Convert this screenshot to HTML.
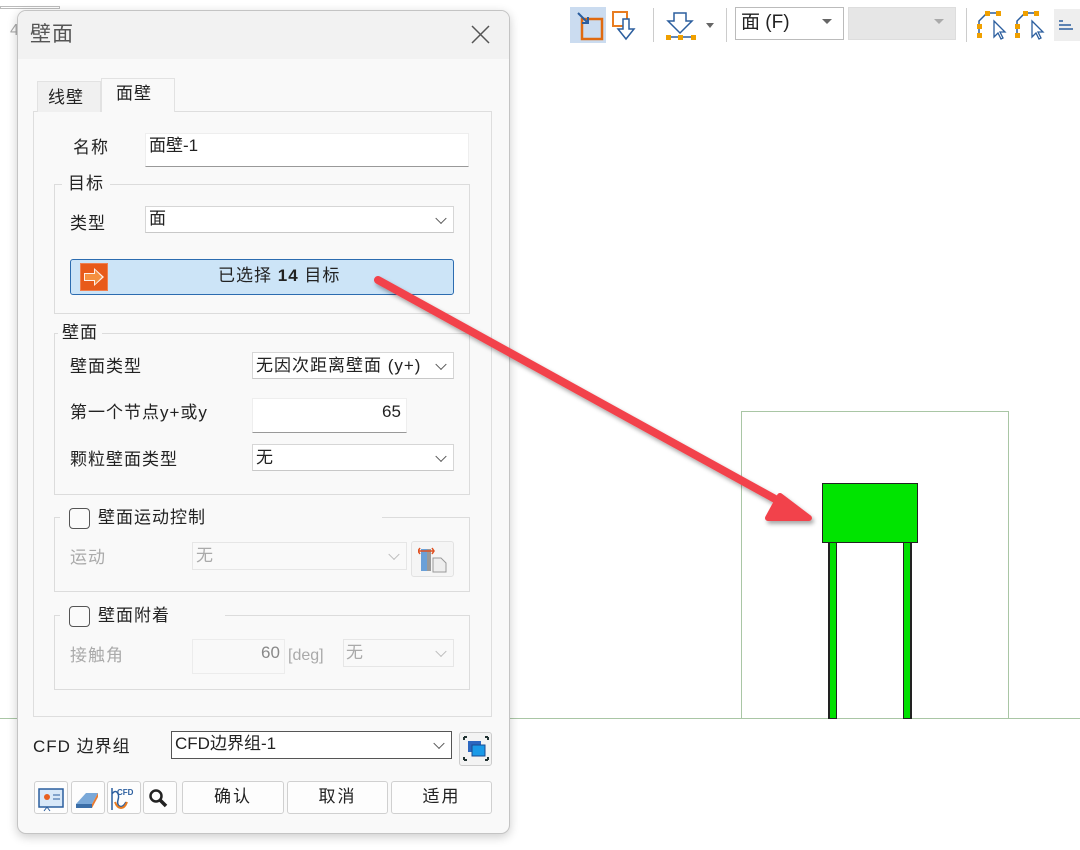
<!DOCTYPE html>
<html><head><meta charset="utf-8"><style>
*{box-sizing:border-box;margin:0;padding:0}
body{width:1080px;height:850px;position:relative;overflow:hidden;background:#fff;font-family:"Liberation Sans","Noto Sans CJK SC",sans-serif;color:#222}
.a{position:absolute}
.t{position:absolute;font-size:16px;line-height:20px;white-space:nowrap;letter-spacing:1px}
.g{color:#aaa}
.box{position:absolute;border:1px solid #dcdcdc}
.sel{position:absolute;background:#fff;border:1px solid #d6d6d6;border-bottom-color:#c8c8c8}
.chev{position:absolute;right:8px;top:50%;width:8px;height:8px;border-right:1.3px solid #555;border-bottom:1.3px solid #555;transform:translateY(-70%) rotate(45deg)}
.btn{position:absolute;background:#fdfdfd;border:1px solid #d0d0d0;border-radius:3px;text-align:center;font-size:17px;line-height:30px;letter-spacing:2px}
.cb{position:absolute;width:21px;height:21px;border:1.5px solid #555;border-radius:4px;background:#fafafa}
</style></head><body>
<div class="a" style="left:0;top:718px;width:1080px;height:1px;background:#a9c6a5"></div>
<div class="a" style="left:741px;top:411px;width:268px;height:308px;border:1px solid #a9c6a5"></div>
<div class="a" style="left:828px;top:542px;width:9px;height:177px;background:#00e000;border:1px solid #222;border-left-width:2px"></div>
<div class="a" style="left:903px;top:542px;width:9px;height:177px;background:#00e000;border:1px solid #222;border-right-width:2px"></div>
<div class="a" style="left:822px;top:483px;width:96px;height:60px;background:#00e400;border:1px solid #222"></div>
<div class="a" style="left:0;top:6px;width:60px;height:3px;border:1px solid #bbb"></div>
<div class="t" style="left:10px;top:21px;color:#aaa">4</div>
<div class="a" style="left:570px;top:7px;width:36px;height:36px;background:#cbdcf0"></div>
<svg class="a" style="left:570px;top:7px" width="120" height="36">
<rect x="12" y="12" width="20" height="20" fill="none" stroke="#e06a10" stroke-width="2.5"/>
<path d="M8 6l10 10m0-6v6h-6" stroke="#2b5e9e" stroke-width="2" fill="none"/>
<rect x="43" y="5" width="14" height="14" fill="none" stroke="#e87c20" stroke-width="2"/>
<path d="M53 12h6v10h5l-8 10-8-10h5z" fill="#fff" stroke="#2b5e9e" stroke-width="1.5"/>
</svg>
<div class="a" style="left:653px;top:8px;width:1px;height:34px;background:#ccc"></div>
<svg class="a" style="left:664px;top:7px" width="60" height="36">
<path d="M10 6h12v8h6l-12 12-12-12h6z" fill="#fff" stroke="#2b5e9e" stroke-width="1.5"/>
<path d="M3 30h28" stroke="#2b5e9e" stroke-width="1.5"/>
<rect x="2" y="28" width="5" height="5" fill="#f0a000"/><rect x="14" y="28" width="5" height="5" fill="#f0a000"/><rect x="27" y="28" width="5" height="5" fill="#f0a000"/>
<path d="M42 16h8l-4 5z" fill="#666"/>
</svg>
<div class="a" style="left:726px;top:8px;width:1px;height:34px;background:#ccc"></div>
<div class="a" style="left:735px;top:7px;width:109px;height:33px;border:1px solid #bbb;background:#fff"></div>
<div class="t" style="left:741px;top:13px;font-size:19px;letter-spacing:0">面 (F)</div>
<svg class="a" style="left:822px;top:18px" width="12" height="8"><path d="M0 1h10l-5 5z" fill="#666"/></svg>
<div class="a" style="left:848px;top:7px;width:108px;height:33px;background:#e6e6e6;border:1px solid #ddd"></div>
<svg class="a" style="left:934px;top:18px" width="12" height="8"><path d="M0 1h10l-5 5z" fill="#aaa"/></svg>
<div class="a" style="left:966px;top:8px;width:1px;height:34px;background:#ccc"></div>
<svg class="a" style="left:976px;top:9px" width="104" height="32">
<path d="M3 26V12l8-8h12" stroke="#2b5e9e" stroke-width="1.5" fill="none"/>
<rect x="1" y="15" width="5" height="5" fill="#f0a000"/><rect x="1" y="24" width="5" height="5" fill="#f0a000"/><rect x="9" y="2" width="5" height="5" fill="#f0a000"/><rect x="20" y="2" width="5" height="5" fill="#f0a000"/>
<path d="M18 12v16l4-4 3 6 2-1-3-6h5z" fill="#fff" stroke="#2b5e9e" stroke-width="1.3"/>
<path d="M41 26V12l8-8h12" stroke="#2b5e9e" stroke-width="1.5" fill="none"/>
<rect x="39" y="15" width="5" height="5" fill="#f0a000"/><rect x="39" y="24" width="5" height="5" fill="#f0a000"/><rect x="47" y="2" width="5" height="5" fill="#f0a000"/><rect x="58" y="2" width="5" height="5" fill="#f0a000"/>
<path d="M56 12v16l4-4 3 6 2-1-3-6h5z" fill="#fff" stroke="#2b5e9e" stroke-width="1.3"/>
<rect x="78" y="0" width="26" height="32" fill="#eee"/>
<path d="M83 12h4M83 16h12M83 20h14" stroke="#2b5e9e" stroke-width="1.5"/>
</svg>
<div class="a" style="left:17px;top:10px;width:493px;height:824px;background:#f9f9f9;border:1px solid #c4c4c4;border-radius:9px;box-shadow:0 3px 10px rgba(0,0,0,.2);overflow:hidden">
<div class="a" style="left:0;top:0;width:493px;height:48px;background:#f2f2f2"></div>
</div>
<div class="t" style="left:30px;top:23px;font-size:21px;line-height:24px;color:#555">壁面</div>
<svg class="a" style="left:471px;top:25px" width="19" height="19"><path d="M1 1l17 17M18 1L1 18" stroke="#555" stroke-width="1.5"/></svg>
<div class="a" style="left:33px;top:111px;width:459px;height:606px;border:1px solid #dedede"></div>
<div class="a" style="left:37px;top:81px;width:64px;height:31px;background:#f0f0f0;border:1px solid #e2e2e2;border-bottom:none"></div>
<div class="t" style="left:48px;top:88px;font-size:17px">线壁</div>
<div class="a" style="left:101px;top:78px;width:74px;height:34px;background:#f9f9f9;border:1px solid #e2e2e2;border-bottom:none"></div>
<div class="t" style="left:116px;top:84px;font-size:17px">面壁</div>
<div class="t" style="left:73px;top:138px;font-size:17px">名称</div>
<div class="sel" style="left:145px;top:133px;width:324px;height:34px;border-color:#eee;border-bottom:1px solid #999"></div>
<div class="t" style="left:149px;top:136px;font-size:17px;letter-spacing:0">面壁-1</div>
<div class="box" style="left:54px;top:184px;width:416px;height:130px"></div>
<div class="t" style="left:62px;top:174px;font-size:17px;background:#f9f9f9;padding:0 6px 0 6px">目标</div>
<div class="t" style="left:70px;top:214px;font-size:17px">类型</div>
<div class="sel" style="left:145px;top:206px;width:309px;height:27px"><div class="chev"></div></div>
<div class="t" style="left:149px;top:209px;font-size:17px">面</div>
<div class="a" style="left:70px;top:259px;width:384px;height:36px;background:#cce4f7;border:1px solid #2c6cb0;border-radius:3px"></div>
<svg class="a" style="left:80px;top:263px" width="28" height="28"><rect x="0.5" y="0.5" width="27" height="27" fill="#e85a1a" stroke="#f08050"/><path d="M4 10h10V5l10 9-10 9v-5H4z" fill="#fff" opacity=".9"/><path d="M5 11h10V7l7 7-7 7v-4H5z" fill="#f59040"/></svg>
<div class="t" style="left:218px;top:266px;font-size:17px">已选择 <b style="font-weight:bold">14</b> 目标</div>
<div class="box" style="left:54px;top:333px;width:416px;height:162px"></div>
<div class="t" style="left:58px;top:323px;font-size:17px;background:#f9f9f9;padding:0 4px">壁面</div>
<div class="t" style="left:70px;top:357px;font-size:17px">壁面类型</div>
<div class="sel" style="left:252px;top:352px;width:202px;height:27px;overflow:hidden"><div class="a" style="left:3px;top:0;width:167px;height:25px;overflow:hidden"><span class="t" style="left:0;top:3px;font-size:17px">无因次距离壁面 (y+)</span></div><div class="chev"></div></div>
<div class="t" style="left:70px;top:403px;font-size:17px">第一个节点y+或y</div>
<div class="sel" style="left:252px;top:398px;width:155px;height:35px;border-color:#eee;border-bottom:1px solid #999"></div>
<div class="t" style="left:382px;top:402px;font-size:17px;letter-spacing:0">65</div>
<div class="t" style="left:70px;top:450px;font-size:17px">颗粒壁面类型</div>
<div class="sel" style="left:252px;top:444px;width:202px;height:27px"><div class="chev"></div></div>
<div class="t" style="left:256px;top:448px;font-size:17px">无</div>
<div class="box" style="left:54px;top:517px;width:416px;height:75px"></div>
<div class="a" style="left:60px;top:510px;width:322px;height:14px;background:#f9f9f9"></div>
<div class="cb" style="left:69px;top:508px"></div>
<div class="t" style="left:98px;top:508px;font-size:17px">壁面运动控制</div>
<div class="t g" style="left:70px;top:548px;font-size:17px">运动</div>
<div class="sel" style="left:192px;top:542px;width:215px;height:28px;background:#f9f9f9;border-color:#e6e6e6"><div class="chev" style="border-color:#bbb"></div></div>
<div class="t g" style="left:196px;top:546px;font-size:17px">无</div>
<div class="a" style="left:411px;top:541px;width:43px;height:36px;border:1px solid #e2e2e2;border-radius:3px;background:#f5f5f5"></div>
<svg class="a" style="left:418px;top:545px" width="30" height="28"><rect x="3" y="4" width="10" height="22" fill="#6aa0d8"/><rect x="9" y="4" width="4" height="22" fill="#999"/><path d="M0 6h16M2 3l-2 3 2 3M14 3l2 3-2 3" stroke="#e05020" stroke-width="1.5" fill="none"/><path d="M15 13h8l5 5v9H15z" fill="#eee" stroke="#999"/></svg>
<div class="box" style="left:54px;top:615px;width:416px;height:75px"></div>
<div class="a" style="left:60px;top:608px;width:165px;height:14px;background:#f9f9f9"></div>
<div class="cb" style="left:69px;top:606px"></div>
<div class="t" style="left:98px;top:606px;font-size:17px">壁面附着</div>
<div class="t g" style="left:70px;top:646px;font-size:17px">接触角</div>
<div class="a" style="left:192px;top:639px;width:93px;height:35px;border:1px solid #ececec"></div>
<div class="t" style="left:261px;top:643px;font-size:17px;color:#888;letter-spacing:0">60</div>
<div class="t" style="left:288px;top:646px;font-size:16px;color:#aaa;letter-spacing:0">[deg]</div>
<div class="sel" style="left:343px;top:639px;width:111px;height:28px;background:#f9f9f9;border-color:#e6e6e6"><div class="chev" style="border-color:#bbb"></div></div>
<div class="t g" style="left:346px;top:643px;font-size:17px">无</div>
<div class="t" style="left:33px;top:737px;font-size:17px">CFD 边界组</div>
<div class="sel" style="left:171px;top:731px;width:281px;height:28px;border-color:#555"><div class="chev"></div></div>
<div class="t" style="left:175px;top:734px;font-size:17px;letter-spacing:0">CFD边界组-1</div>
<div class="a" style="left:459px;top:732px;width:33px;height:34px;border:1px solid #ccc;border-radius:3px;background:#f3f3f3"></div>
<svg class="a" style="left:462px;top:735px" width="28" height="28"><rect x="6" y="6" width="13" height="11" fill="#2b66c0"/><rect x="10" y="10" width="13" height="11" fill="#1a9ae8" stroke="#1a4a90"/><path d="M2 2h3M23 2h3M2 25h3M23 25h3M2 2v3M26 2v3M2 22v3M26 22v3" stroke="#233" stroke-width="2"/></svg>
<div class="btn" style="left:34px;top:781px;width:34px;height:33px"></div>
<div class="btn" style="left:71px;top:781px;width:34px;height:33px"></div>
<div class="btn" style="left:107px;top:781px;width:34px;height:33px"></div>
<div class="btn" style="left:143px;top:781px;width:34px;height:33px"></div>
<svg class="a" style="left:38px;top:786px" width="140" height="26">
<rect x="1" y="3" width="24" height="18" fill="#d8e8f8" stroke="#2b5e9e" stroke-width="1.5"/><circle cx="9" cy="11" r="3" fill="#e86020"/><path d="M15 9h7M15 13h7M9 21l-3 4M9 21l3 4" stroke="#2b5e9e"/>
<path d="M38 18l10-11h12l-6 11z" fill="#7aa8d8"/><path d="M38 18h16v4H38z" fill="#3b6ea8"/><path d="M54 18l6-11v4l-6 11z" fill="#e87a30"/>
<path d="M74 2v22M74 8c4-6 8 0 6 6s4 10 8 2" stroke="#2b5e9e" stroke-width="1.5" fill="none"/><path d="M77 16c3 8 9 8 12 0" stroke="#e87a20" stroke-width="2" fill="none"/><text x="79" y="9" font-size="8" font-family="Liberation Sans" fill="#2b5e9e" font-weight="bold">CFD</text>
<circle cx="118" cy="10" r="5.5" fill="none" stroke="#222" stroke-width="2.5"/><path d="M122 14l6 6" stroke="#222" stroke-width="3.5"/>
</svg>
<div class="btn" style="left:182px;top:781px;width:102px;height:33px">确认</div>
<div class="btn" style="left:287px;top:781px;width:101px;height:33px">取消</div>
<div class="btn" style="left:391px;top:781px;width:101px;height:33px">适用</div>
<svg class="a" style="left:0;top:0" width="1080" height="850">
<defs><filter id="s" x="-10%" y="-10%" width="120%" height="130%"><feDropShadow dx="2" dy="3" stdDeviation="2" flood-opacity=".35"/></filter></defs>
<g filter="url(#s)"><path d="M378 280L786 505" stroke="#f2434b" stroke-width="8" stroke-linecap="round"/><path d="M809 518L780 496L768 518Z" fill="#f2434b" stroke="#f2434b" stroke-width="6" stroke-linejoin="round"/></g>
</svg>
</body></html>
